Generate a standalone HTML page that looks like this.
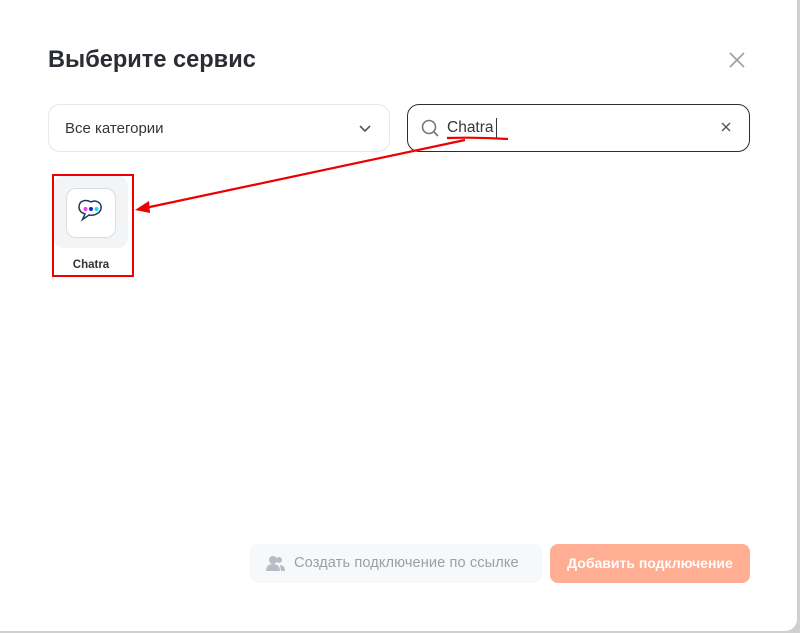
<!DOCTYPE html>
<html><head><meta charset="utf-8"><style>
body{margin:0;width:800px;height:633px;background:#cfcfcf;position:relative;overflow:hidden;font-family:"Liberation Sans","DejaVu Sans",sans-serif}
.modal{position:absolute;left:0;top:0;width:797px;height:631px;background:#fff;border-radius:0 0 12px 0}
.a{position:absolute}
</style></head><body>
<div class="modal">
<div class="a" style="left:48px;top:47px;font-size:23.6px;font-weight:bold;color:#2a2d33">Выберите сервис</div>
<svg class="a" style="left:729px;top:52px" width="16" height="16"><path d="M1 1L15 15M15 1L1 15" stroke="#9aa0a6" stroke-width="1.6"/></svg>
<div class="a" style="left:48px;top:104px;width:340px;height:46px;border:1px solid #e6e7ea;border-radius:12px"></div>
<div class="a" style="left:65px;top:120px;font-size:15px;color:#33363b">Все категории</div>
<svg class="a" style="left:359px;top:125px" width="12" height="8"><path d="M1 1L6 6L11 1" stroke="#555" stroke-width="1.6" fill="none"/></svg>
<div class="a" style="left:407px;top:104px;width:341px;height:46px;border:1px solid #2a2d33;border-radius:12px"></div>
<svg class="a" style="left:421px;top:119px" width="18" height="18"><circle cx="8" cy="8" r="6.5" stroke="#777" stroke-width="1.6" fill="none"/><path d="M13 13L17 17" stroke="#777" stroke-width="1.6"/></svg>
<div class="a" style="left:447px;top:119px;font-size:15.5px;color:#33363b">Chatra</div>
<div class="a" style="left:496px;top:118px;width:1px;height:20px;background:#333"></div>
<svg class="a" style="left:721px;top:122px" width="10" height="10"><path d="M1 1L9 9M9 1L1 9" stroke="#555" stroke-width="1.4"/></svg>
<div class="a" style="left:54px;top:176px;width:74px;height:72px;background:#f3f4f6;border-radius:10px"></div>
<div class="a" style="left:66px;top:188px;width:48px;height:48px;background:#fff;border:1px solid #dcdde0;border-radius:10px"></div>
<svg class="a" style="left:75px;top:197px" width="32" height="30"><path d="M16 5C11 2 4 3.5 4 10c0 4 3 6 6 7l-2.5 5.5 6.5-4.5c4 1 11-1 12-6.5 1-6.5-6-9-10-6.5z" stroke="#1e3a5f" stroke-width="1.5" fill="none"/><circle cx="10.5" cy="12" r="2" fill="#f3f"/><circle cx="16" cy="12" r="2" fill="#22c"/><circle cx="21.5" cy="12" r="2" fill="#2dd"/></svg>
<div class="a" style="left:54px;top:259px;width:74px;text-align:center;font-size:11.5px;font-weight:bold;color:#333">Chatra</div>
<div class="a" style="left:52px;top:174px;width:78px;height:99px;border:2px solid #e00"></div>
<svg class="a" style="left:0;top:0" width="800" height="633"><path d="M447 138Q478 137 508 139" stroke="#e00" stroke-width="2.2" fill="none"/><path d="M465 140L145 208" stroke="#e00" stroke-width="2.2"/><path d="M135 210L149 201L150 213Z" fill="#e00"/></svg>
<div class="a" style="left:250px;top:544px;width:292px;height:39px;background:#f7f8f9;border-radius:8px"></div>
<svg class="a" style="left:265px;top:555px" width="20" height="18"><circle cx="8" cy="5" r="4" fill="#b8bcc4"/><path d="M1 16c0-5 3-7 7-7s7 2 7 7z" fill="#b8bcc4"/><circle cx="14" cy="5" r="3" fill="#b8bcc4"/><path d="M15 10c3 0 5 2 5 6h-4z" fill="#b8bcc4"/></svg>
<div class="a" style="left:294px;top:555px;font-size:14.6px;color:#9aa0a6;letter-spacing:0.1px">Создать подключение по ссылке</div>
<div class="a" style="left:550px;top:544px;width:200px;height:39px;background:#ffae94;border-radius:8px;color:#fff;font-size:14px;font-weight:bold;text-align:center;line-height:39px">Добавить подключение</div>
</div>
</body></html>
